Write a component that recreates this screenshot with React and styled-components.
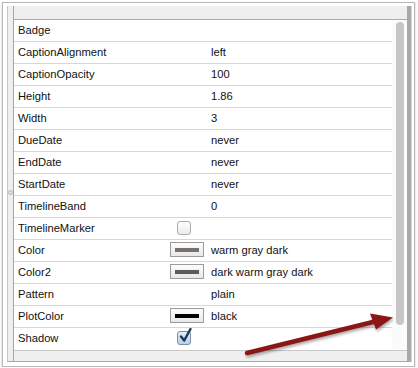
import React from 'react'
import styled, { createGlobalStyle } from 'styled-components'

const GlobalStyle = createGlobalStyle`
  html, body {
    margin: 0;
    padding: 0;
    background: #ffffff;
  }
  body {
    font-family: "Liberation Sans", Arial, sans-serif;
  }
`

const Frame = styled.div`
  position: relative;
  box-sizing: border-box;
  margin: 2px 0 0 2px;
  width: 413px;
  height: 365px;
  padding: 3px 3px 4px 4px;
  background: #ffffff;
  border: 1px solid #b9b9b9;
  box-shadow: 0 1px 2px rgba(0, 0, 0, 0.25);
`

const Panel = styled.div`
  display: flex;
  box-sizing: border-box;
  height: 356px;
  border-left: 1px solid #c6c6c6;
  border-bottom: 1px solid #a9a9a9;
  border-right: 4px solid #a8a8a8;
  box-shadow: 1px 0 0 #d6d6d6;
`

const Handle = styled.div`
  width: 5px;
  background: #efefef;
  display: flex;
  justify-content: center;
  padding-top: 184px;
  box-sizing: border-box;

  &::after {
    content: '';
    width: 3px;
    height: 3px;
    border-radius: 50%;
    border: 1px solid #b4b4b4;
    background: #e4e4e4;
  }
`

const Main = styled.div`
  flex: 1;
  display: flex;
  flex-direction: column;
  border-left: 1px solid #a4a4a4;
`

const HeaderStrip = styled.div`
  height: 13px;
  background: #efefef;
  border-bottom: 1px solid #ababab;
`

const Body = styled.div`
  display: flex;
`

const Table = styled.div`
  flex: 1;
  background: #ffffff;
`

const Row = styled.div`
  display: grid;
  grid-template-columns: 152px 1fr;
  height: 21px;
  border-bottom: 1px solid #d7d7d7;
  font-size: 11.2px;
  color: #111111;
  &:last-child {
    border-bottom: none;
    height: 22px;
  }
`

const Label = styled.div`
  display: flex;
  align-items: center;
  padding: 0 0 2px 4px;
`

const Value = styled.div`
  display: flex;
  align-items: center;
  padding: 0 0 2px 4px;
`

const Lead = styled.div`
  width: 41px;
  flex: none;
  display: flex;
  align-items: center;
`

const Swatch = styled.div`
  box-sizing: border-box;
  width: 34px;
  height: 15px;
  border: 1px solid #9c9c9c;
  background: linear-gradient(#fdfdfd, #e8e8e8);
  display: flex;
  align-items: center;
  justify-content: center;

  &::after {
    content: '';
    width: 24px;
    height: 4px;
    background: ${(p) => p.$color};
  }
`

const Box = styled.div`
  position: relative;
  box-sizing: border-box;
  width: 14px;
  height: 14px;
  margin-left: 7px;
  border-radius: 3px;
  border: 1px solid ${(p) => (p.$checked ? '#7d8ea3' : '#ababab')};
  background: ${(p) =>
    p.$checked
      ? 'linear-gradient(#e3eefa, #b7d0ec)'
      : 'linear-gradient(#ffffff, #ececec)'};

  svg {
    position: absolute;
    left: 1px;
    top: -4px;
  }
`

const Scroller = styled.div`
  width: 15px;
  display: flex;
  justify-content: center;
  padding: 2px 0 25px;
  box-sizing: border-box;
  background: #fbfbfb;
`

const Thumb = styled.div`
  width: 8px;
  border-radius: 4px;
  background: #c6c6c6;
`

const BottomStrip = styled.div`
  height: 10px;
  background: #efefef;
  border-top: 1px solid #c9c9c9;
`

const Arrow = styled.svg`
  position: absolute;
  left: -2px;
  top: -2px;
  pointer-events: none;
  filter: drop-shadow(1px 2px 1.5px rgba(0, 0, 0, 0.35));
`

const rows = [
  { name: 'Badge', value: '' },
  { name: 'CaptionAlignment', value: 'left' },
  { name: 'CaptionOpacity', value: '100' },
  { name: 'Height', value: '1.86' },
  { name: 'Width', value: '3' },
  { name: 'DueDate', value: 'never' },
  { name: 'EndDate', value: 'never' },
  { name: 'StartDate', value: 'never' },
  { name: 'TimelineBand', value: '0' },
  { name: 'TimelineMarker', check: false },
  { name: 'Color', value: 'warm gray dark', swatch: '#77716b' },
  { name: 'Color2', value: 'dark warm gray dark', swatch: '#5e5a56' },
  { name: 'Pattern', value: 'plain' },
  { name: 'PlotColor', value: 'black', swatch: '#000000' },
  { name: 'Shadow', check: true },
]

function Lead_({ row }) {
  if (row.swatch) return <Lead><Swatch $color={row.swatch} /></Lead>
  if (row.check !== undefined) {
    return (
      <Lead>
        <Box $checked={row.check}>
          {row.check && (
            <svg width="14" height="16" viewBox="0 0 14 16">
              <path d="M2 8.5 L5.2 12.5 L11.5 1" fill="none" stroke="#1c3658" strokeWidth="2.4" strokeLinecap="round" strokeLinejoin="round" />
            </svg>
          )}
        </Box>
      </Lead>
    )
  }
  return <Lead />
}

export default function App() {
  return (
    <>
      <GlobalStyle />
      <Frame>
        <Panel>
          <Handle />
          <Main>
            <HeaderStrip />
            <Body>
              <Table>
                {rows.map((row) => (
                  <Row key={row.name}>
                    <Label>{row.name}</Label>
                    <Value>
                      <Lead_ row={row} />
                      {row.value}
                    </Value>
                  </Row>
                ))}
              </Table>
              <Scroller>
                <Thumb />
              </Scroller>
            </Body>
            <BottomStrip />
          </Main>
        </Panel>
        <Arrow width="418" height="368" viewBox="0 0 418 368">
          <line x1="246" y1="352" x2="376" y2="320" stroke="#8c1616" strokeWidth="4.5" strokeLinecap="round" />
          <polygon points="369,312.5 392,316.5 375,328.5" fill="#8c1616" />
        </Arrow>
      </Frame>
    </>
  )
}
